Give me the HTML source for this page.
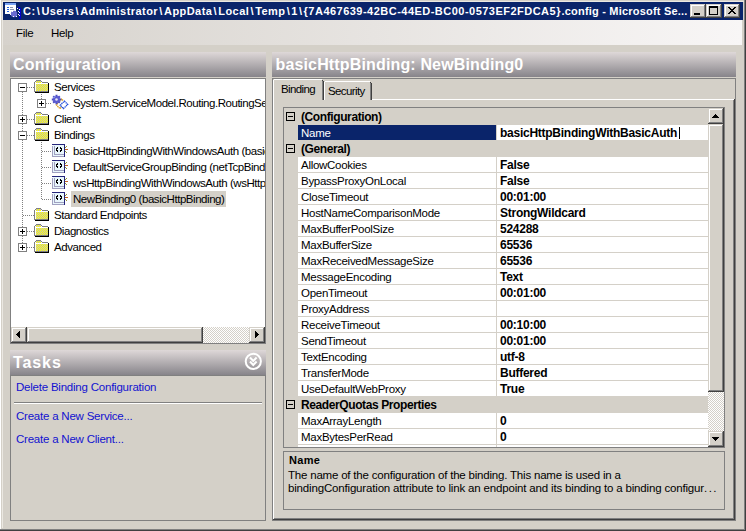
<!DOCTYPE html>
<html><head><meta charset="utf-8">
<style>
*{box-sizing:border-box;margin:0;padding:0}
html,body{width:746px;height:531px;overflow:hidden;background:#d4d0c8;font-family:"Liberation Sans",sans-serif;font-size:11px;color:#000}
.a{position:absolute}
.t{position:absolute;white-space:nowrap;line-height:13px}
.b{font-weight:bold}
.dither{background:repeating-conic-gradient(#fff 0 25%,#d4d0c8 0 50%) 0 0/2px 2px}
.btn{position:absolute;background:#d4d0c8;box-shadow:inset -1px -1px #404040,inset 1px 1px #d4d0c8,inset -2px -2px #808080,inset 2px 2px #fff}
.tt{position:absolute;white-space:nowrap;line-height:16px;padding:0 2px;margin-left:-2px;font-size:11.5px;letter-spacing:-0.45px}
.pt{position:absolute;white-space:nowrap;line-height:16px;font-size:11.5px;letter-spacing:-0.28px;margin-top:1px}
.b.pt{font-size:12px;letter-spacing:-0.26px}
.lk{color:#1212d0}
.sel{background:#d4d0c8}
.hdr{position:absolute;background:linear-gradient(#ded8d8,#87848a);color:#fff;font-weight:bold;font-size:16px;line-height:25px;letter-spacing:0.25px}
</style></head><body>
<!-- window frame -->
<div class="a" style="left:0;top:0;width:746px;height:531px;box-shadow:inset -1px -1px #404040,inset -2px -2px #808080"></div>
<div class="a" style="left:0;top:0;width:1px;height:529px;background:#fff"></div>
<div class="a" style="left:2px;top:1px;width:1px;height:527px;background:#ebe8e2"></div>
<div class="a" style="left:2px;top:1px;width:742px;height:1px;background:#ebe8e2"></div>
<!-- title bar -->
<div class="a" style="left:3px;top:2px;width:740px;height:18px;background:#0a246a"></div>
<svg class="a" style="left:5px;top:3px" width="17" height="16" shape-rendering="crispEdges">
<rect x="0" y="0" width="11" height="11" fill="#fff"/><rect x="0" y="0" width="11" height="2" fill="#7aa4f4"/>
<rect x="2" y="4" width="2" height="1" fill="#2060e0"/><rect x="2" y="6" width="2" height="1" fill="#2060e0"/><rect x="2" y="8" width="2" height="1" fill="#2060e0"/>
<rect x="5" y="4" width="3" height="1" fill="#9098b0"/><rect x="5" y="6" width="4" height="1" fill="#9098b0"/>
<circle cx="9" cy="11" r="3.2" fill="#6a6ad0" shape-rendering="geometricPrecision"/>
<rect x="13" y="4" width="2" height="1" fill="#0000c8"/><rect x="14" y="5" width="2" height="11" fill="#0000c8"/>
<path d="M5 11h1M7 8h1M8 13h1M11 13h1M13 11h1M13 8h1M14 6h1M14 9h1M14 12h1M12 5h1" stroke="#fff"/>
</svg>
<div class="t b" style="left:23px;top:3px;color:#fff;line-height:16px;letter-spacing:0.45px">C:<span style="margin:0 1.2px">\</span>Users<span style="margin:0 1.2px">\</span>Administrator<span style="margin:0 1.2px">\</span>AppData<span style="margin:0 1.2px">\</span>Local<span style="margin:0 1.2px">\</span>Temp<span style="margin:0 1.2px">\</span>1<span style="margin:0 1.2px">\</span></div>
<div class="t b" style="left:303.6px;top:3px;color:#fff;line-height:16px;letter-spacing:0.48px">{7A467639-42BC-44ED-BC00-0573EF2FDCA5}</div>
<div class="t b" style="left:561.5px;top:3px;color:#fff;line-height:16px;letter-spacing:0.2px">.config - Microsoft Se...</div>
<div class="btn" style="left:690px;top:4px;width:16px;height:14px"><div class="a" style="left:4px;top:9px;width:6px;height:2px;background:#000"></div></div>
<div class="btn" style="left:706px;top:4px;width:16px;height:14px"><div class="a" style="left:3px;top:2px;width:9px;height:9px;border:1px solid #000;border-top-width:2px"></div></div>
<div class="btn" style="left:724px;top:4px;width:16px;height:14px"><svg class="a" style="left:4px;top:3px" width="8" height="7" shape-rendering="crispEdges"><path d="M0 0h2v1h1v1h2V1h1V0h2v1H7v1H6v1H5v1h1v1h1v1h1v1H6V6H5V5H3v1H2v1H0V6h1V5h1V4h1V3H2V2H1V1H0z" fill="#000"/></svg></div>
<!-- menu -->
<div class="a" style="left:3px;top:20px;width:739px;height:25px;background:linear-gradient(90deg,#d6d2cc,#f8f6f6)"></div>
<div class="t" style="left:16px;top:27px;font-size:11.5px;letter-spacing:-0.3px">File</div>
<div class="t" style="left:51px;top:27px;font-size:11.5px;letter-spacing:-0.3px">Help</div>

<!-- left header -->
<div class="hdr" style="left:10px;top:52px;width:256px;height:25px;padding-left:3px">Configuration</div>
<!-- tree -->
<div class="a" style="left:10px;top:78px;width:256px;height:266px;background:#fff;border:1px solid #808080"></div>
<svg width="0" height="0" style="position:absolute">
<defs>
<pattern id="yd" width="2" height="2" patternUnits="userSpaceOnUse"><rect width="2" height="2" fill="#c0c0c0"/><rect width="1" height="1" fill="#ffff00"/><rect x="1" y="1" width="1" height="1" fill="#ffff00"/></pattern>
</defs></svg>
<!-- tree content -->
<div class="a" style="left:11px;top:79px;width:254px;height:248px;overflow:hidden">
<svg class="a" style="left:-11px;top:-79px" width="280" height="340" shape-rendering="crispEdges">
<path d="M22.5 88V248" stroke="#808080" stroke-dasharray="1 1"/>
<path d="M41.5 94V104" stroke="#808080" stroke-dasharray="1 1"/>
<path d="M41.5 142V200" stroke="#808080" stroke-dasharray="1 1"/>
<path d="M23 87.5H34" stroke="#808080" stroke-dasharray="1 1"/>
<g transform="translate(18 83)"><rect x="0.5" y="0.5" width="8" height="8" fill="#fff" stroke="#808080"/><path d="M2 4.5H7" stroke="#000"/></g>
<g transform="translate(34 80)">
<rect x="2" y="0" width="5" height="1" fill="#808080"/>
<rect x="1" y="1" width="1" height="1" fill="#808080"/>
<rect x="7" y="1" width="1" height="1" fill="#808080"/>
<rect x="2" y="1" width="5" height="2" fill="url(#yd)"/>
<rect x="0" y="2" width="1" height="10" fill="#808080"/>
<rect x="8" y="2" width="6" height="1" fill="#808080"/>
<rect x="1" y="2" width="1" height="9" fill="#fff"/>
<rect x="1" y="3" width="13" height="1" fill="#fff"/>
<rect x="2" y="4" width="12" height="7" fill="url(#yd)"/>
<rect x="1" y="11" width="13" height="1" fill="#808080"/>
<rect x="14" y="3" width="1" height="10" fill="#000"/>
<rect x="1" y="12" width="14" height="1" fill="#000"/>
</g>
<path d="M42 103.5H52" stroke="#808080" stroke-dasharray="1 1"/>
<g transform="translate(37 99)"><rect x="0.5" y="0.5" width="8" height="8" fill="#fff" stroke="#808080"/><path d="M2 4.5H7M4.5 2V7" stroke="#000"/></g>
<g transform="translate(52 95)">
<g shape-rendering="geometricPrecision">
<path d="M11 5.5L9.6 4.1L4.3 9.8L7.9 13.6L10 11.5" fill="#fff" stroke="#d89a10" stroke-width="1.3" stroke-dasharray="1.3 0.6"/>
<path d="M12.4 6.1L15.7 9.5L11.4 13.6L8.2 10.2Z" fill="#fff" stroke="#1c4ad8" stroke-width="1.3" stroke-dasharray="1.3 0.6"/>
<path d="M4.5 -0.2V9.2M-0.2 4.5H9.2M1.2 1.2L7.8 7.8M7.8 1.2L1.2 7.8" stroke="#4a4ac4" stroke-width="2"/>
<circle cx="4.5" cy="4.5" r="3.4" fill="#5a5ad0"/>
<circle cx="4.5" cy="4.5" r="1.3" fill="#e8e8f4"/>
<path d="M1.5 3L3 1.5" stroke="#b0c8ff" stroke-width="1"/>
</g>
</g>
<path d="M23 119.5H34" stroke="#808080" stroke-dasharray="1 1"/>
<g transform="translate(18 115)"><rect x="0.5" y="0.5" width="8" height="8" fill="#fff" stroke="#808080"/><path d="M2 4.5H7M4.5 2V7" stroke="#000"/></g>
<g transform="translate(34 112)">
<rect x="2" y="0" width="5" height="1" fill="#808080"/>
<rect x="1" y="1" width="1" height="1" fill="#808080"/>
<rect x="7" y="1" width="1" height="1" fill="#808080"/>
<rect x="2" y="1" width="5" height="2" fill="url(#yd)"/>
<rect x="0" y="2" width="1" height="10" fill="#808080"/>
<rect x="8" y="2" width="6" height="1" fill="#808080"/>
<rect x="1" y="2" width="1" height="9" fill="#fff"/>
<rect x="1" y="3" width="13" height="1" fill="#fff"/>
<rect x="2" y="4" width="12" height="7" fill="url(#yd)"/>
<rect x="1" y="11" width="13" height="1" fill="#808080"/>
<rect x="14" y="3" width="1" height="10" fill="#000"/>
<rect x="1" y="12" width="14" height="1" fill="#000"/>
</g>
<path d="M23 135.5H34" stroke="#808080" stroke-dasharray="1 1"/>
<g transform="translate(18 131)"><rect x="0.5" y="0.5" width="8" height="8" fill="#fff" stroke="#808080"/><path d="M2 4.5H7" stroke="#000"/></g>
<g transform="translate(34 128)">
<rect x="2" y="0" width="5" height="1" fill="#808080"/>
<rect x="1" y="1" width="1" height="1" fill="#808080"/>
<rect x="7" y="1" width="1" height="1" fill="#808080"/>
<rect x="2" y="1" width="5" height="2" fill="url(#yd)"/>
<rect x="0" y="2" width="1" height="10" fill="#808080"/>
<rect x="8" y="2" width="6" height="1" fill="#808080"/>
<rect x="1" y="2" width="1" height="9" fill="#fff"/>
<rect x="1" y="3" width="13" height="1" fill="#fff"/>
<rect x="2" y="4" width="12" height="7" fill="url(#yd)"/>
<rect x="1" y="11" width="13" height="1" fill="#808080"/>
<rect x="14" y="3" width="1" height="10" fill="#000"/>
<rect x="1" y="12" width="14" height="1" fill="#000"/>
</g>
<path d="M42 151.5H52" stroke="#808080" stroke-dasharray="1 1"/>
<g transform="translate(52 144)">
<rect x="1" y="1" width="12" height="11" fill="#e8f6fc"/>
<path d="M0.5 2V12.5H12M2.5 2V10.5H12" fill="none" stroke="#a0a0c0"/>
<path d="M0.5 1V0.5H12.5V13" fill="none" stroke="#24247a"/>
<path d="M6 3.5L4.5 5.5L6 7.5M8 3.5L9.5 5.5L8 7.5" fill="none" stroke="#000" stroke-width="1.3"/>
<path d="M13 5.5H15.5" stroke="#c06020"/>
<path d="M13 3.5L15 2.5M13 7.5L15 8.5" stroke="#909030"/>
</g>
<path d="M42 167.5H52" stroke="#808080" stroke-dasharray="1 1"/>
<g transform="translate(52 160)">
<rect x="1" y="1" width="12" height="11" fill="#e8f6fc"/>
<path d="M0.5 2V12.5H12M2.5 2V10.5H12" fill="none" stroke="#a0a0c0"/>
<path d="M0.5 1V0.5H12.5V13" fill="none" stroke="#24247a"/>
<path d="M6 3.5L4.5 5.5L6 7.5M8 3.5L9.5 5.5L8 7.5" fill="none" stroke="#000" stroke-width="1.3"/>
<path d="M13 5.5H15.5" stroke="#c06020"/>
<path d="M13 3.5L15 2.5M13 7.5L15 8.5" stroke="#909030"/>
</g>
<path d="M42 183.5H52" stroke="#808080" stroke-dasharray="1 1"/>
<g transform="translate(52 176)">
<rect x="1" y="1" width="12" height="11" fill="#e8f6fc"/>
<path d="M0.5 2V12.5H12M2.5 2V10.5H12" fill="none" stroke="#a0a0c0"/>
<path d="M0.5 1V0.5H12.5V13" fill="none" stroke="#24247a"/>
<path d="M6 3.5L4.5 5.5L6 7.5M8 3.5L9.5 5.5L8 7.5" fill="none" stroke="#000" stroke-width="1.3"/>
<path d="M13 5.5H15.5" stroke="#c06020"/>
<path d="M13 3.5L15 2.5M13 7.5L15 8.5" stroke="#909030"/>
</g>
<path d="M42 199.5H52" stroke="#808080" stroke-dasharray="1 1"/>
<g transform="translate(52 192)">
<rect x="1" y="1" width="12" height="11" fill="#e8f6fc"/>
<path d="M0.5 2V12.5H12M2.5 2V10.5H12" fill="none" stroke="#a0a0c0"/>
<path d="M0.5 1V0.5H12.5V13" fill="none" stroke="#24247a"/>
<path d="M6 3.5L4.5 5.5L6 7.5M8 3.5L9.5 5.5L8 7.5" fill="none" stroke="#000" stroke-width="1.3"/>
<path d="M13 5.5H15.5" stroke="#c06020"/>
<path d="M13 3.5L15 2.5M13 7.5L15 8.5" stroke="#909030"/>
</g>
<path d="M23 215.5H34" stroke="#808080" stroke-dasharray="1 1"/>
<g transform="translate(34 208)">
<rect x="2" y="0" width="5" height="1" fill="#808080"/>
<rect x="1" y="1" width="1" height="1" fill="#808080"/>
<rect x="7" y="1" width="1" height="1" fill="#808080"/>
<rect x="2" y="1" width="5" height="2" fill="url(#yd)"/>
<rect x="0" y="2" width="1" height="10" fill="#808080"/>
<rect x="8" y="2" width="6" height="1" fill="#808080"/>
<rect x="1" y="2" width="1" height="9" fill="#fff"/>
<rect x="1" y="3" width="13" height="1" fill="#fff"/>
<rect x="2" y="4" width="12" height="7" fill="url(#yd)"/>
<rect x="1" y="11" width="13" height="1" fill="#808080"/>
<rect x="14" y="3" width="1" height="10" fill="#000"/>
<rect x="1" y="12" width="14" height="1" fill="#000"/>
</g>
<path d="M23 231.5H34" stroke="#808080" stroke-dasharray="1 1"/>
<g transform="translate(18 227)"><rect x="0.5" y="0.5" width="8" height="8" fill="#fff" stroke="#808080"/><path d="M2 4.5H7M4.5 2V7" stroke="#000"/></g>
<g transform="translate(34 224)">
<rect x="2" y="0" width="5" height="1" fill="#808080"/>
<rect x="1" y="1" width="1" height="1" fill="#808080"/>
<rect x="7" y="1" width="1" height="1" fill="#808080"/>
<rect x="2" y="1" width="5" height="2" fill="url(#yd)"/>
<rect x="0" y="2" width="1" height="10" fill="#808080"/>
<rect x="8" y="2" width="6" height="1" fill="#808080"/>
<rect x="1" y="2" width="1" height="9" fill="#fff"/>
<rect x="1" y="3" width="13" height="1" fill="#fff"/>
<rect x="2" y="4" width="12" height="7" fill="url(#yd)"/>
<rect x="1" y="11" width="13" height="1" fill="#808080"/>
<rect x="14" y="3" width="1" height="10" fill="#000"/>
<rect x="1" y="12" width="14" height="1" fill="#000"/>
</g>
<path d="M23 247.5H34" stroke="#808080" stroke-dasharray="1 1"/>
<g transform="translate(18 243)"><rect x="0.5" y="0.5" width="8" height="8" fill="#fff" stroke="#808080"/><path d="M2 4.5H7M4.5 2V7" stroke="#000"/></g>
<g transform="translate(34 240)">
<rect x="2" y="0" width="5" height="1" fill="#808080"/>
<rect x="1" y="1" width="1" height="1" fill="#808080"/>
<rect x="7" y="1" width="1" height="1" fill="#808080"/>
<rect x="2" y="1" width="5" height="2" fill="url(#yd)"/>
<rect x="0" y="2" width="1" height="10" fill="#808080"/>
<rect x="8" y="2" width="6" height="1" fill="#808080"/>
<rect x="1" y="2" width="1" height="9" fill="#fff"/>
<rect x="1" y="3" width="13" height="1" fill="#fff"/>
<rect x="2" y="4" width="12" height="7" fill="url(#yd)"/>
<rect x="1" y="11" width="13" height="1" fill="#808080"/>
<rect x="14" y="3" width="1" height="10" fill="#000"/>
<rect x="1" y="12" width="14" height="1" fill="#000"/>
</g>
</svg>
<div class="a" style="left:-11px;top:-79px;width:300px;height:340px">
<div class="tt" style="left:54px;top:79px">Services</div>
<div class="tt" style="left:73px;top:95px">System.ServiceModel.Routing.RoutingService</div>
<div class="tt" style="left:54px;top:111px">Client</div>
<div class="tt" style="left:54px;top:127px">Bindings</div>
<div class="tt" style="left:73px;top:143px">basicHttpBindingWithWindowsAuth (basicHttpBinding)</div>
<div class="tt" style="left:73px;top:159px">DefaultServiceGroupBinding (netTcpBinding)</div>
<div class="tt" style="left:73px;top:175px">wsHttpBindingWithWindowsAuth (wsHttpBinding)</div>
<div class="tt sel" style="left:73px;top:191px">NewBinding0 (basicHttpBinding)</div>
<div class="tt" style="left:54px;top:207px">Standard Endpoints</div>
<div class="tt" style="left:54px;top:223px">Diagnostics</div>
<div class="tt" style="left:54px;top:239px">Advanced</div>
</div>
</div>
<!-- h scrollbar -->
<div class="a dither" style="left:11px;top:327px;width:254px;height:16px"></div>
<div class="btn" style="left:11px;top:327px;width:16px;height:16px"><svg class="a" style="left:5px;top:4px" width="4" height="7" shape-rendering="crispEdges"><path d="M3 0h1v7H3V6H2V5H1V4H0V3h1V2h1V1h1z" fill="#000"/></svg></div>
<div class="btn" style="left:27px;top:327px;width:176px;height:16px"></div>
<div class="btn" style="left:249px;top:327px;width:16px;height:16px"><svg class="a" style="left:6px;top:4px" width="4" height="7" shape-rendering="crispEdges"><path d="M0 0h1v1h1v1h1v1h1v1H3v1H2v1H1v1H0z" fill="#000"/></svg></div>

<!-- tasks -->
<div class="hdr" style="left:10px;top:350px;width:256px;height:25px;padding-left:3px;letter-spacing:0.9px">Tasks</div>
<div class="a" style="left:10px;top:375px;width:256px;height:146px;border:1px solid #808080"></div>
<div class="t lk" style="left:16px;top:381px;font-size:11.5px;letter-spacing:-0.22px">Delete Binding Configuration</div>
<div class="a" style="left:14px;top:402px;width:248px;height:2px;border-top:1px solid #808080;border-bottom:1px solid #fff"></div>
<div class="t lk" style="left:16px;top:410px;font-size:11.5px;letter-spacing:-0.22px">Create a New Service...</div>
<div class="t lk" style="left:16px;top:433px;font-size:11.5px;letter-spacing:-0.22px">Create a New Client...</div>
<svg class="a" style="left:243px;top:352px" width="20" height="20"><circle cx="10.3" cy="9.3" r="7.6" fill="none" stroke="#fff" stroke-width="2"/><path d="M7 5.5L10.3 9L13.6 5.5M7 9.5L10.3 13L13.6 9.5" fill="none" stroke="#fff" stroke-width="2"/></svg>

<!-- right header -->
<div class="hdr" style="left:272px;top:52px;width:464px;height:25px;padding-left:3.5px;letter-spacing:0.15px">basicHttpBinding: NewBinding0</div>
<div class="a" style="left:272px;top:78px;width:464px;height:443px;border:1px solid #808080"></div>
<!-- tab page -->
<div class="a" style="left:273px;top:99px;width:462px;height:421px;box-shadow:inset -1px -1px #404040,inset 1px 1px #fff,inset -2px -2px #808080"></div>

<!-- tabs -->
<div class="a" style="left:324px;top:81px;width:48px;height:19px;background:#d4d0c8;border-top:1px solid #fff;border-left:1px solid #fff;box-shadow:inset -1px 0 #404040,inset -2px 0 #808080"></div>
<div class="a" style="left:273px;top:79px;width:51px;height:21px;background:#d4d0c8;border-top:1px solid #fff;border-left:1px solid #fff;box-shadow:inset -1px 0 #404040,inset -2px 0 #808080"></div>
<div class="a" style="left:274px;top:99px;width:48px;height:1px;background:#d4d0c8"></div>
<div class="a" style="left:273px;top:79px;width:1px;height:1px;background:#d4d0c8"></div>
<div class="a" style="left:323px;top:79px;width:1px;height:1px;background:#d4d0c8"></div>
<div class="a" style="left:322px;top:79px;width:1px;height:1px;background:#d4d0c8"></div>
<div class="a" style="left:322px;top:80px;width:1px;height:1px;background:#404040"></div>
<div class="a" style="left:323px;top:80px;width:1px;height:1px;background:#d4d0c8"></div>
<div class="a" style="left:324px;top:81px;width:1px;height:1px;background:#d4d0c8"></div>
<div class="a" style="left:371px;top:81px;width:1px;height:1px;background:#d4d0c8"></div>
<div class="a" style="left:370px;top:81px;width:1px;height:1px;background:#d4d0c8"></div>
<div class="a" style="left:370px;top:82px;width:1px;height:1px;background:#404040"></div>
<div class="a" style="left:371px;top:82px;width:1px;height:1px;background:#d4d0c8"></div>
<div class="t" style="left:281px;top:83px;font-size:11.5px;letter-spacing:-0.6px">Binding</div>
<div class="t" style="left:328px;top:85px;font-size:11.5px;letter-spacing:-0.6px">Security</div>
<!-- property grid -->
<div class="a" style="left:283px;top:107px;width:442px;height:341px;background:#d4d0c8;border:1px solid #808080"></div>
<!-- property grid content -->
<div class="a" style="left:0;top:0;width:746px;height:531px;clip-path:inset(108px 38px 84px 284px)">
<svg class="a" style="left:286px;top:112px" width="9" height="9" shape-rendering="crispEdges"><rect x="0.5" y="0.5" width="8" height="8" fill="none" stroke="#000"/><path d="M2 4.5H7" stroke="#000"/></svg>
<div class="pt b" style="letter-spacing:-0.4px;left:301px;top:108px">(Configuration)</div>
<div class="a" style="left:298px;top:125px;width:198px;height:15px;background:#0a246a"></div>
<div class="a" style="left:497px;top:125px;width:211px;height:15px;background:#fff"></div>
<div class="pt" style="left:301px;top:124px;color:#fff">Name</div>
<div class="pt b" style="left:500px;top:124px">basicHttpBindingWithBasicAuth</div>
<svg class="a" style="left:286px;top:144px" width="9" height="9" shape-rendering="crispEdges"><rect x="0.5" y="0.5" width="8" height="8" fill="none" stroke="#000"/><path d="M2 4.5H7" stroke="#000"/></svg>
<div class="pt b" style="letter-spacing:-0.4px;left:301px;top:140px">(General)</div>
<div class="a" style="left:298px;top:157px;width:198px;height:15px;background:#fff"></div>
<div class="a" style="left:497px;top:157px;width:211px;height:15px;background:#fff"></div>
<div class="pt" style="left:301px;top:156px">AllowCookies</div>
<div class="pt b" style="left:500px;top:156px">False</div>
<div class="a" style="left:298px;top:173px;width:198px;height:15px;background:#fff"></div>
<div class="a" style="left:497px;top:173px;width:211px;height:15px;background:#fff"></div>
<div class="pt" style="left:301px;top:172px">BypassProxyOnLocal</div>
<div class="pt b" style="left:500px;top:172px">False</div>
<div class="a" style="left:298px;top:189px;width:198px;height:15px;background:#fff"></div>
<div class="a" style="left:497px;top:189px;width:211px;height:15px;background:#fff"></div>
<div class="pt" style="left:301px;top:188px">CloseTimeout</div>
<div class="pt b" style="left:500px;top:188px">00:01:00</div>
<div class="a" style="left:298px;top:205px;width:198px;height:15px;background:#fff"></div>
<div class="a" style="left:497px;top:205px;width:211px;height:15px;background:#fff"></div>
<div class="pt" style="left:301px;top:204px">HostNameComparisonMode</div>
<div class="pt b" style="left:500px;top:204px">StrongWildcard</div>
<div class="a" style="left:298px;top:221px;width:198px;height:15px;background:#fff"></div>
<div class="a" style="left:497px;top:221px;width:211px;height:15px;background:#fff"></div>
<div class="pt" style="left:301px;top:220px">MaxBufferPoolSize</div>
<div class="pt b" style="left:500px;top:220px">524288</div>
<div class="a" style="left:298px;top:237px;width:198px;height:15px;background:#fff"></div>
<div class="a" style="left:497px;top:237px;width:211px;height:15px;background:#fff"></div>
<div class="pt" style="left:301px;top:236px">MaxBufferSize</div>
<div class="pt b" style="left:500px;top:236px">65536</div>
<div class="a" style="left:298px;top:253px;width:198px;height:15px;background:#fff"></div>
<div class="a" style="left:497px;top:253px;width:211px;height:15px;background:#fff"></div>
<div class="pt" style="left:301px;top:252px">MaxReceivedMessageSize</div>
<div class="pt b" style="left:500px;top:252px">65536</div>
<div class="a" style="left:298px;top:269px;width:198px;height:15px;background:#fff"></div>
<div class="a" style="left:497px;top:269px;width:211px;height:15px;background:#fff"></div>
<div class="pt" style="left:301px;top:268px">MessageEncoding</div>
<div class="pt b" style="left:500px;top:268px">Text</div>
<div class="a" style="left:298px;top:285px;width:198px;height:15px;background:#fff"></div>
<div class="a" style="left:497px;top:285px;width:211px;height:15px;background:#fff"></div>
<div class="pt" style="left:301px;top:284px">OpenTimeout</div>
<div class="pt b" style="left:500px;top:284px">00:01:00</div>
<div class="a" style="left:298px;top:301px;width:198px;height:15px;background:#fff"></div>
<div class="a" style="left:497px;top:301px;width:211px;height:15px;background:#fff"></div>
<div class="pt" style="left:301px;top:300px">ProxyAddress</div>
<div class="a" style="left:298px;top:317px;width:198px;height:15px;background:#fff"></div>
<div class="a" style="left:497px;top:317px;width:211px;height:15px;background:#fff"></div>
<div class="pt" style="left:301px;top:316px">ReceiveTimeout</div>
<div class="pt b" style="left:500px;top:316px">00:10:00</div>
<div class="a" style="left:298px;top:333px;width:198px;height:15px;background:#fff"></div>
<div class="a" style="left:497px;top:333px;width:211px;height:15px;background:#fff"></div>
<div class="pt" style="left:301px;top:332px">SendTimeout</div>
<div class="pt b" style="left:500px;top:332px">00:01:00</div>
<div class="a" style="left:298px;top:349px;width:198px;height:15px;background:#fff"></div>
<div class="a" style="left:497px;top:349px;width:211px;height:15px;background:#fff"></div>
<div class="pt" style="left:301px;top:348px">TextEncoding</div>
<div class="pt b" style="left:500px;top:348px">utf-8</div>
<div class="a" style="left:298px;top:365px;width:198px;height:15px;background:#fff"></div>
<div class="a" style="left:497px;top:365px;width:211px;height:15px;background:#fff"></div>
<div class="pt" style="left:301px;top:364px">TransferMode</div>
<div class="pt b" style="left:500px;top:364px">Buffered</div>
<div class="a" style="left:298px;top:381px;width:198px;height:15px;background:#fff"></div>
<div class="a" style="left:497px;top:381px;width:211px;height:15px;background:#fff"></div>
<div class="pt" style="left:301px;top:380px">UseDefaultWebProxy</div>
<div class="pt b" style="left:500px;top:380px">True</div>
<svg class="a" style="left:286px;top:400px" width="9" height="9" shape-rendering="crispEdges"><rect x="0.5" y="0.5" width="8" height="8" fill="none" stroke="#000"/><path d="M2 4.5H7" stroke="#000"/></svg>
<div class="pt b" style="letter-spacing:-0.4px;left:301px;top:396px">ReaderQuotas Properties</div>
<div class="a" style="left:298px;top:413px;width:198px;height:15px;background:#fff"></div>
<div class="a" style="left:497px;top:413px;width:211px;height:15px;background:#fff"></div>
<div class="pt" style="left:301px;top:412px">MaxArrayLength</div>
<div class="pt b" style="left:500px;top:412px">0</div>
<div class="a" style="left:298px;top:429px;width:198px;height:15px;background:#fff"></div>
<div class="a" style="left:497px;top:429px;width:211px;height:15px;background:#fff"></div>
<div class="pt" style="left:301px;top:428px">MaxBytesPerRead</div>
<div class="pt b" style="left:500px;top:428px">0</div>
<div class="a" style="left:298px;top:445px;width:198px;height:15px;background:#fff"></div>
<div class="a" style="left:497px;top:445px;width:211px;height:15px;background:#fff"></div>
<div class="a" style="left:679px;top:127px;width:1px;height:12px;background:#000"></div>
</div>
<!-- grid v scrollbar -->
<div class="a dither" style="left:708px;top:108px;width:16px;height:339px"></div>
<div class="btn" style="left:708px;top:108px;width:16px;height:16px"><svg class="a" style="left:4px;top:6px" width="7" height="4" shape-rendering="crispEdges"><path d="M3 0h1v1h1v1h1v1h1v1H0V3h1V2h1V1h1z" fill="#000"/></svg></div>
<div class="btn" style="left:708px;top:124px;width:16px;height:268px"></div>
<div class="btn" style="left:708px;top:431px;width:16px;height:16px"><svg class="a" style="left:4px;top:6px" width="7" height="4" shape-rendering="crispEdges"><path d="M0 0h7v1H6v1H5v1H4v1H3V3H2V2H1V1H0z" fill="#000"/></svg></div>


<!-- description -->
<div class="a" style="left:283px;top:451px;width:442px;height:59px;border:1px solid #808080"></div>
<div class="t b" style="left:289px;top:454px;letter-spacing:0.3px">Name</div>
<div class="t" style="left:288px;top:469px;line-height:13px;font-size:11.5px;letter-spacing:-0.2px">The name of the configuration of the binding. This name is used in a</div>
<div class="t" style="left:288px;top:482px;line-height:13px;font-size:11.5px;letter-spacing:-0.17px">bindingConfiguration attribute to link an endpoint and its binding to a binding configur<span style="letter-spacing:1.5px">...</span></div>
</body></html>
